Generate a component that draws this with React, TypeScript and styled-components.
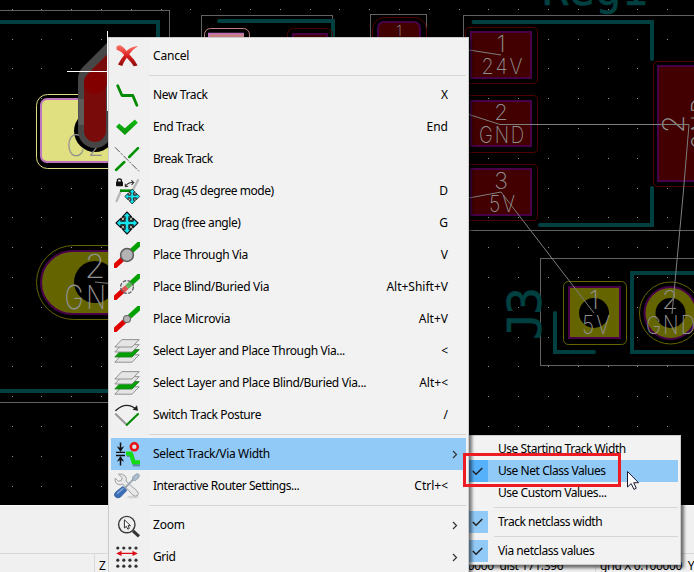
import React from "react";
import styled, { createGlobalStyle } from "styled-components";

const GlobalStyle = createGlobalStyle`
  * { box-sizing: border-box; }
  body { margin: 0; background: #000; overflow: hidden; }
`;

const UI_FONT = `"Noto Sans", "Open Sans", sans-serif`;
const TEAL = "#004040";
const LABEL = "#7e7e7e";

const Window = styled.div`
  position: relative;
  display: flex;
  flex-direction: column;
  width: 694px;
  height: 572px;
  overflow: hidden;
  font-family: ${UI_FONT};
  font-size: 12px;
  color: #000;
`;

const Board = styled.svg`
  display: block;
  flex: none;
  width: 694px;
  height: 505px;
  background: #000;
`;

const MessagePanel = styled.div`
  flex: none;
  height: 48px;
  background: #f0f0f0;
  border-top: 1px solid #fafafa;
`;

const StatusBar = styled.div`
  display: flex;
  flex: none;
  height: 30px;
  background: #f0f0f0;
  border-top: 1px solid #d9d9d9;
`;

const StatusField = styled.div<{ $width: number; $end?: boolean }>`
  flex: none;
  width: ${(p) => p.$width}px;
  padding: 3px ${(p) => (p.$end ? 45 : 4)}px 0 4px;
  line-height: 17px;
  white-space: pre;
  letter-spacing: -0.35px;
  text-align: ${(p) => (p.$end ? "right" : "left")};
  border-right: 1px solid #d9d9d9;
`;

const Menu = styled.div`
  position: absolute;
  z-index: 2;
  left: 108px;
  top: 37px;
  width: 361px;
  height: 560px;
  padding: 2px;
  border: 1px solid #ccc;
  background: linear-gradient(90deg, #f0f0f0 40px, #f2f2f2 40px);
  box-shadow: 3px 3px 3px rgba(0, 0, 0, 0.5);
`;

const MenuRow = styled.div<{ $active?: boolean }>`
  display: grid;
  grid-template-columns: 26px 1fr auto 18px;
  align-items: center;
  height: 32px;
  padding-left: 3px;
  background: ${(p) => (p.$active ? "#91c9f7" : "transparent")};
`;

const Icon = styled.svg`
  display: block;
  width: 26px;
  height: 26px;
`;

const Label = styled.span<{ $spacing?: number }>`
  padding-left: 13px;
  line-height: 16px;
  white-space: pre;
  letter-spacing: ${(p) => p.$spacing ?? -0.2}px;
`;

const Shortcut = styled.span`
  line-height: 16px;
  white-space: pre;
`;

const Chevron = styled.svg`
  display: block;
  width: 6px;
  height: 9px;
  margin-left: 4px;
`;

const Separator = styled.div<{ $inset: number }>`
  height: 7px;
  padding: 3px 0 3px ${(p) => p.$inset}px;
  &::after {
    content: "";
    display: block;
    height: 1px;
    background: #d5d5d5;
  }
`;

const SubMenu = styled.div`
  position: absolute;
  z-index: 1;
  left: 466px;
  top: 435px;
  width: 215px;
  height: 130px;
  padding: 2px;
  border: 1px solid #ccc;
  background: #f2f2f2;
  box-shadow: 3px 3px 3px rgba(0, 0, 0, 0.55);
`;

const SubRow = styled.div<{ $active?: boolean }>`
  display: flex;
  align-items: center;
  height: 22px;
  background: ${(p) => (p.$active ? "#91c9f7" : "transparent")};
`;

const CheckCell = styled.span<{ $checked?: boolean; $active?: boolean }>`
  display: flex;
  align-items: center;
  justify-content: flex-end;
  flex: none;
  width: 19px;
  height: 22px;
  padding-right: 5px;
  background: ${(p) => (p.$active ? "#56b0fa" : p.$checked ? "#91c9f7" : "transparent")};
`;

const SubLabel = styled.span`
  padding-left: 10px;
  line-height: 16px;
  white-space: pre;
  letter-spacing: -0.45px;
`;

const Highlight = styled.div`
  position: absolute;
  z-index: 3;
  left: 463px;
  top: 453px;
  width: 158px;
  height: 34px;
  border: 3px solid #ed1c24;
`;

const Pointer = styled.svg`
  position: absolute;
  z-index: 4;
  left: 626px;
  top: 470px;
  width: 15px;
  height: 21px;
`;

/* ---------- menu icons, all on a 26 x 26 grid ---------- */

const CancelIcon = () => (
  <Icon viewBox="0 0 26 26">
    <defs>
      <linearGradient id="cancelRed" x1="0" y1="0" x2="0" y2="1">
        <stop offset="0" stopColor="#ff7a6a" />
        <stop offset="0.5" stopColor="#d92020" />
        <stop offset="1" stopColor="#8c0a0a" />
      </linearGradient>
    </defs>
    <path
      d="M2.5 3.5 Q5 1.5 7 2.6 Q10 4.5 12.5 8 Q17 3.4 24.2 3 Q18.5 6.5 15.2 11.3 Q20.5 16.5 23.6 22.5 L19.8 23.2 Q16.5 18.5 12.8 14.8 Q9.8 18.8 8.2 23 L4 21.6 Q6.8 16 10.2 12 Q6.5 8 2.5 6.6 Z"
      fill="url(#cancelRed)"
    />
  </Icon>
);

const NewTrackIcon = () => (
  <Icon viewBox="0 0 26 26">
    <path d="M3.7 3.8 L8 13.5 H18.8 L22.9 23.2" fill="none" stroke="#008a00" strokeWidth="2.8" strokeLinecap="round" strokeLinejoin="round" />
  </Icon>
);

const CheckIcon = () => (
  <Icon viewBox="0 0 26 26">
    <defs>
      <linearGradient id="checkGreen" x1="0" y1="0" x2="0" y2="1">
        <stop offset="0" stopColor="#12bc12" />
        <stop offset="1" stopColor="#089008" />
      </linearGradient>
    </defs>
    <path d="M2 12.7 L5.2 9.5 L10.8 14.2 L20.8 5.5 L23.8 8.8 L10.9 21 Z" fill="url(#checkGreen)" />
  </Icon>
);

const BreakIcon = () => (
  <Icon viewBox="0 0 26 26" fill="none">
    <path d="M1 1.3 L25 25.3" stroke="#444" strokeWidth="0.9" strokeDasharray="7 1.5 2 1.5" />
    <path d="M2 24 L10.3 16 M15.2 11 L24 2.2" stroke="#009000" strokeWidth="2.5" strokeLinecap="round" />
  </Icon>
);

const MoveShape = () => (
  <g>
    <path
      d="M0 -11 L4.6 -6.2 H1.9 V-1.9 H6.2 V-4.6 L11 0 L6.2 4.6 V1.9 H1.9 V6.2 H4.6 L0 11 L-4.6 6.2 H-1.9 V1.9 H-6.2 V4.6 L-11 0 L-6.2 -4.6 V-1.9 H-1.9 V-6.2 H-4.6 Z"
      fill="#16e2ee"
      stroke="#101010"
      strokeWidth="1.1"
      strokeLinejoin="round"
    />
    {[-4, 4].map((x) => [-4, 4].map((y) => <circle key={`${x}${y}`} cx={x} cy={y} r="1.5" fill="#f2f2f2" stroke="#151515" strokeWidth="1.2" />))}
  </g>
);

const DragIcon = () => (
  <Icon viewBox="0 0 26 26" fill="none">
    <path d="M2.6 23 L7.2 12.5 M18.8 12 L24 2.2" stroke="#b8b8b8" strokeWidth="2.4" strokeLinecap="round" />
    <path d="M6 12.7 H17" stroke="#008a00" strokeWidth="2.6" />
    <path d="M3.4 4 V2.4 Q3.4 0.8 5.4 0.8 Q7.4 0.8 7.4 2.4 V4" stroke="#111" strokeWidth="1.3" />
    <rect x="2" y="3.5" width="7" height="4.8" rx="0.8" fill="#111" />
    <path d="M11.5 8.5 Q14 4 19 4.5 M11.3 5.8 L11.4 8.7 L14.2 8.3 M17.3 2.3 L19.7 4.6 L17.6 6.8" stroke="#333" strokeWidth="1.1" />
    <g transform="translate(18.2 18.5) scale(0.68)">
      <MoveShape />
    </g>
  </Icon>
);

const MoveIcon = () => (
  <Icon viewBox="0 0 26 26">
    <g transform="translate(13 13)">
      <MoveShape />
    </g>
  </Icon>
);

const ViaIcon = ({ kind }: { kind: "through" | "blind" | "micro" }) => (
  <Icon viewBox="0 0 26 26" fill="none">
    <path d="M-1 25.8 L13 13" stroke="#e00000" strokeWidth="5" />
    <path d="M13 13 L27 0.2" stroke="#00a000" strokeWidth="5" />
    {kind === "through" && <circle cx="13" cy="13" r="6.4" fill="#b3b3b3" stroke="#595959" strokeWidth="1.5" />}
    {kind === "micro" && <circle cx="13" cy="13" r="3.5" fill="#b3b3b3" stroke="#686868" strokeWidth="1.1" />}
    {kind === "blind" && (
      <>
        <circle cx="13" cy="13" r="6" fill="#d8d8d8" fillOpacity="0.4" />
        <circle cx="13" cy="13" r="6.4" stroke="#5c5c5c" strokeWidth="1.3" strokeDasharray="3.6 1.4" />
      </>
    )}
  </Icon>
);

const LayersIcon = () => (
  <Icon viewBox="0 0 26 26">
    {[15.2, 10, 5, 0].map((dy) => (
      <path
        key={dy}
        d="M7.8 1.6 H25.2 L18 9 H0.8 Z"
        transform={`translate(0 ${dy})`}
        fill={dy === 10 ? "#00a000" : "#e4e4e4"}
        stroke={dy === 10 ? "#268026" : "#888"}
        strokeWidth="0.9"
      />
    ))}
  </Icon>
);

const PostureIcon = () => (
  <Icon viewBox="0 0 26 26" fill="none" strokeLinecap="round">
    <path d="M1.8 12.2 L12.7 22.8" stroke="#999" strokeWidth="2.1" />
    <path d="M12.9 22.8 L24 12" stroke="#008a00" strokeWidth="2.1" />
    <path d="M1.8 8.4 Q12.5 -1.2 22.5 7.5" stroke="#222" strokeWidth="1.4" />
    <path d="M18.6 7.8 L24 8.8 L23 3.3 Z" fill="#222" />
  </Icon>
);

const TrackWidthIcon = () => (
  <Icon viewBox="0 0 26 26" fill="none">
    <path d="M13 14 H17.5 L20.5 23.4 H26" stroke="#5c8cae" strokeWidth="4" />
    <path d="M12 12.5 H16.8 L19.6 21.2 H26" stroke="#14dc14" strokeWidth="4" />
    <circle cx="20.3" cy="5.8" r="3.5" fill="#d8e4ec" stroke="#ea1010" strokeWidth="2.5" />
    <path d="M2 11.4 H11 M2 14.5 H11" stroke="#111" strokeWidth="1.4" />
    <path d="M6.5 1.5 V8 M6.5 18 V24.5" stroke="#111" strokeWidth="1.5" />
    <path d="M2.8 5.3 L6.5 7 L10.2 5.3 L6.5 11 Z M2.8 20.7 L6.5 19 L10.2 20.7 L6.5 15 Z" fill="#111" />
  </Icon>
);

const ToolsIcon = () => (
  <Icon viewBox="0 0 26 26">
    <ellipse cx="19" cy="24" rx="6" ry="1.4" fill="#d4d4d4" />
    <path
      d="M4.5 1.2 L8.2 4.6 L7.3 7.5 L4.3 8.2 L1.2 5.2 Q0.3 10 4.2 11.5 Q6.6 12.2 8.6 11 L18.5 21.7 Q21.3 24.4 23.8 22.3 Q25.2 20.2 23 18 L12.2 8.1 Q13 5 11 2.8 Q8.5 0.2 4.5 1.2 Z"
      fill="#e8e8e8"
      stroke="#969696"
      strokeWidth="0.9"
    />
    <path d="M10.8 15.2 L20.2 5.4" stroke="#9aa6b2" strokeWidth="1.8" />
    <path d="M18.7 3.8 L22.8 0.6 L25.2 1.6 L25 4.4 L21.3 7.6 L18.7 7 Z" fill="#aebdcd" stroke="#7c90a8" strokeWidth="0.7" />
    <path d="M8.8 13.4 L12.9 17.3 L6.5 24 Q3.2 26 1 23.4 Q-0.4 21.2 1.8 19.1 Z" fill="#3c6eb8" stroke="#2b5596" strokeWidth="0.8" />
    <path d="M3 20.8 L9.5 15.2" stroke="#87aee0" strokeWidth="1.3" />
  </Icon>
);

const ZoomIcon = () => (
  <Icon viewBox="0 0 26 26">
    <circle cx="12.8" cy="12.6" r="8.2" fill="#f0f0f0" stroke="#3a3a3a" strokeWidth="1.4" />
    <path d="M19 18.8 L25 24.4" stroke="#333" strokeWidth="3.2" />
    <path d="M10.4 7.8 V16 L12.3 14.3 L13.8 17.2 L15.3 16.4 L14 13.7 H16.5 Z" fill="#fff" stroke="#333" strokeWidth="1" />
  </Icon>
);

const GridIcon = () => (
  <Icon viewBox="0 0 26 26">
    {[4, 16.2, 22.2].map((y) => [3.8, 9.8, 15.9, 22].map((x) => <circle key={`${x}-${y}`} cx={x} cy={y} r="1.6" fill="#333" />))}
    <path d="M2.2 9.4 L7.5 6.8 V8.7 H18.5 V6.8 L23.8 9.4 L18.5 12 V10.1 H7.5 V12 Z" fill="#dd0c14" />
  </Icon>
);

const Tick = () => (
  <svg width="11" height="9" viewBox="0 0 11 9" fill="none">
    <path d="M0.8 4 L4.1 7.3 L10.3 1" stroke="#222" strokeWidth="1.5" />
  </svg>
);

/* ---------- board drawing ---------- */

type StrokeTextProps = {
  x: number;
  y: number;
  size: number;
  width?: number;
  rotate?: boolean;
  children: string;
};

const StrokeText = ({ x, y, size, width, rotate, children }: StrokeTextProps) => (
  <text
    x={width ? x - width / 2 : x}
    y={y}
    fontFamily="Inter, Roboto, sans-serif"
    fontWeight="200"
    fontSize={size}
    letterSpacing={width ? size * 0.1 : 0}
    fill="#909090"
    textAnchor={width ? "start" : "middle"}
    textLength={width ? width + size * 0.09 : undefined}
    lengthAdjust="spacingAndGlyphs"
    transform={rotate ? `rotate(-90 ${x} ${y})` : undefined}
  >
    {children}
  </text>
);

const SilkText = ({ x, y, size, width, rotate, children }: StrokeTextProps) => (
  <text
    x={x}
    y={y}
    fontFamily='"DejaVu Sans Mono", monospace'
    fontSize={size}
    fill={TEAL}
    stroke={TEAL}
    strokeWidth="0.6"
    textLength={width}
    transform={rotate ? `rotate(-90 ${x} ${y})` : undefined}
  >
    {children}
  </text>
);

const dots = Array.from({ length: 17 }, (_, r) => Array.from({ length: 23 }, (_, c) => `M${Math.floor(12.1 + c * 29.8)} ${Math.floor(9.2 + r * 29.8)}h1v1h-1z`).join("")).join("");

const BoardDrawing = () => (
  <Board viewBox="0 0 694 505" fill="none">
    <path d={dots} fill="#909090" />

    <g stroke="#626262" shapeRendering="crispEdges">
      <path d="M0 10.5 H169.5 V40 M201.5 40 V15.5 H332.5 V40 M370.5 40 V14.5 H426.5 V40" />
      <path d="M463.5 40 V15.5 H694 M469 230.5 H694 M694 258.5 H540.5 V365.5 H694 M0 402.5 H108" />
    </g>

    <g stroke={TEAL} strokeWidth="4" strokeLinecap="round">
      <path d="M0 22 H158 V40 M219 21 H333 V40 M0 391 H110" />
      <path d="M473.5 22 H652 V59 M652 188 V225 H540 M555 313 V352 H594 M696 273 H632 V352 H696" />
    </g>

    <SilkText x={542} y={4.5} size={44}>Reg1</SilkText>
    <SilkText x={541} y={340} size={46} width={53} rotate>J3</SilkText>

    <g strokeWidth="1" stroke="#c48080">
      <rect x="204.5" y="28.5" width="45" height="40" rx="6" />
      <rect x="208" y="33" width="36" height="30" fill="#c48080" stroke="none" />
      <path d="M209 33 V63 M208 33.5 H244" stroke="#c070c0" strokeWidth="1.5" />
    </g>
    <g stroke="#500000">
      <rect x="287.5" y="28.5" width="45" height="40" rx="6" />
      <rect x="372.5" y="17.5" width="54" height="50" rx="12" />
      <path d="M469 27.5 H533 Q537.5 27.5 537.5 32 V79 Q537.5 83.5 533 83.5 H469 M465.5 40 V32 Q465.5 27.5 470 27.5" />
      <path d="M469 95.5 H533 Q537.5 95.5 537.5 100 V148 Q537.5 152.5 533 152.5 H469" />
      <path d="M469 164.5 H533 Q537.5 164.5 537.5 169 V216 Q537.5 220.5 533 220.5 H469" />
      <path d="M694 61.5 H658 Q653.5 61.5 653.5 66 V182 Q653.5 186.5 658 186.5 H694" />
    </g>
    <g fill="#420000" stroke="#480048" strokeWidth="2">
      <rect x="293" y="34" width="34" height="30" />
      <rect x="378" y="22" width="42" height="40" rx="6" />
      <rect x="471" y="32" width="60" height="46" />
      <rect x="471" y="101" width="60" height="45" />
      <rect x="471" y="169" width="60" height="46" />
      <rect x="658" y="66" width="40" height="115" />
    </g>

    <StrokeText x={399} y={36} size={15}>1</StrokeText>
    <StrokeText x={501} y={52} size={23}>1</StrokeText>
    <StrokeText x={502} y={74} size={22} width={41}>24V</StrokeText>
    <StrokeText x={501} y={120} size={22}>2</StrokeText>
    <StrokeText x={501.5} y={143} size={23} width={45}>GND</StrokeText>
    <StrokeText x={501} y={189} size={23}>3</StrokeText>
    <StrokeText x={502} y={212} size={23} width={26}>5V</StrokeText>
    <StrokeText x={684} y={124} size={30} rotate>2</StrokeText>
    <StrokeText x={713} y={124} size={30} width={52} rotate>GND</StrokeText>

    {/* connector J3 */}
    <rect x="563.5" y="281.5" width="63" height="63" rx="5" stroke="#646400" />
    <rect x="569" y="287" width="51" height="51" fill="#646400" stroke="#480048" strokeWidth="2" />
    <circle cx="594" cy="313" r="15" fill="#000" />
    <circle cx="670.5" cy="313" r="31" stroke="#646400" />
    <circle cx="670.5" cy="313" r="26" fill="#646400" stroke="#480048" strokeWidth="2" />
    <circle cx="670.5" cy="313" r="15" fill="#000" />
    <StrokeText x={594} y={309} size={26}>1</StrokeText>
    <StrokeText x={596} y={334} size={25} width={28}>5V</StrokeText>
    <StrokeText x={670} y={309} size={26}>2</StrokeText>
    <StrokeText x={670.5} y={334} size={25} width={49}>GND</StrokeText>

    {/* left pads */}
    <rect x="36.5" y="94.5" width="120" height="74" rx="11" stroke="#dede80" />
    <rect x="41" y="99" width="110" height="63" rx="6" fill="#e0e080" stroke="#bd75bd" strokeWidth="2" />
    <circle cx="95" cy="131" r="21" fill="#000" />
    <StrokeText x={85} y={156} size={30} width={37}>C2</StrokeText>
    <rect x="36.5" y="245.5" width="150" height="74" rx="37" stroke="#646400" />
    <rect x="41" y="251" width="140" height="63" rx="31.5" fill="#646400" stroke="#480048" strokeWidth="2" />
    <circle cx="95" cy="282" r="21" fill="#000" />
    <StrokeText x={95} y={278} size={33}>2</StrokeText>
    <StrokeText x={95.5} y={309} size={33} width={62}>GND</StrokeText>

    {/* track being routed */}
    <path d="M95 131 V79 L120 54" stroke="#464646" strokeWidth="34" strokeLinecap="round" strokeLinejoin="round" />
    <path d="M78.5 99 H84 V125 H78.5 Z" fill="#5c5c58" />
    <path d="M95 131 V82 L120 57" stroke="#7a0b0b" strokeWidth="22" strokeLinecap="round" strokeLinejoin="round" />
    <circle cx="95" cy="83" r="11" fill="#820000" />

    {/* unrouted connections */}
    <g stroke={LABEL}>
      <path d="M469 50 L501 55 M469 114.5 L500 124.5 H689 L683 196 L672 314 M469 198 L501 192 L594 313 M95 282 L110 283.5" />
    </g>
    <path d="M67 71.5 H108 M107.5 31 V111" stroke="#fff" shapeRendering="crispEdges" />
  </Board>
);

/* ---------- menu contents ---------- */

type Entry = { icon: React.ReactNode; label: string; keys?: string; sub?: boolean; active?: boolean; spacing?: number };

const groups: Entry[][] = [
  [{ icon: <CancelIcon />, label: "Cancel" }],
  [
    { icon: <NewTrackIcon />, label: "New Track", keys: "X", spacing: -0.37 },
    { icon: <CheckIcon />, label: "End Track", keys: "End", spacing: -0.37 },
    { icon: <BreakIcon />, label: "Break Track", spacing: -0.5 },
    { icon: <DragIcon />, label: "Drag (45 degree mode)", keys: "D", spacing: -0.46 },
    { icon: <MoveIcon />, label: "Drag (free angle)", keys: "G", spacing: -0.43 },
    { icon: <ViaIcon kind="through" />, label: "Place Through Via", keys: "V", spacing: -0.37 },
    { icon: <ViaIcon kind="blind" />, label: "Place Blind/Buried Via", keys: "Alt+Shift+V", spacing: -0.34 },
    { icon: <ViaIcon kind="micro" />, label: "Place Microvia", keys: "Alt+V", spacing: -0.2 },
    { icon: <LayersIcon />, label: "Select Layer and Place Through Via...", keys: "<", spacing: -0.38 },
    { icon: <LayersIcon />, label: "Select Layer and Place Blind/Buried Via...", keys: "Alt+<", spacing: -0.36 },
    { icon: <PostureIcon />, label: "Switch Track Posture", keys: "/", spacing: -0.4 },
  ],
  [
    { icon: <TrackWidthIcon />, label: "Select Track/Via Width", sub: true, active: true, spacing: -0.33 },
    { icon: <ToolsIcon />, label: "Interactive Router Settings...", keys: "Ctrl+<", spacing: -0.45 },
  ],
  [
    { icon: <ZoomIcon />, label: "Zoom", sub: true },
    { icon: <GridIcon />, label: "Grid", sub: true, spacing: -0.45 },
  ],
];

const subGroups = [
  [
    { label: "Use Starting Track Width", checked: false, active: false },
    { label: "Use Net Class Values", checked: true, active: true },
    { label: "Use Custom Values...", checked: false, active: false },
  ],
  [{ label: "Track netclass width", checked: true, active: false }],
  [{ label: "Via netclass values", checked: true, active: false }],
];

export default function App() {
  return (
    <>
      <GlobalStyle />
      <Window>
        <BoardDrawing />
        <MessagePanel />
        <StatusBar>
          <StatusField $width={95} />
          <StatusField $width={261}>Z</StatusField>
          <StatusField $width={240} $end>{"dx 0.000000  dy 0.000000  dist 171.396"}</StatusField>
          <StatusField $width={110}>grid X 0.100000  Y</StatusField>
        </StatusBar>

        <Menu>
          {groups.map((group, i) => (
            <React.Fragment key={i}>
              {i > 0 && <Separator $inset={38} />}
              {group.map((e) => (
                <MenuRow key={e.label} $active={e.active}>
                  {e.icon}
                  <Label $spacing={e.spacing}>{e.label}</Label>
                  <Shortcut>{e.keys}</Shortcut>
                  {e.sub && (
                    <Chevron viewBox="0 0 6 9" fill="none">
                      <path d="M1 1 L4.5 4.5 L1 8" stroke="#333" strokeWidth="1.2" />
                    </Chevron>
                  )}
                </MenuRow>
              ))}
            </React.Fragment>
          ))}
        </Menu>

        <SubMenu>
          {subGroups.map((group, i) => (
            <React.Fragment key={i}>
              {i > 0 && <Separator $inset={25} />}
              {group.map((e) => (
                <SubRow key={e.label} $active={e.active}>
                  <CheckCell $checked={e.checked} $active={e.active}>{e.checked && <Tick />}</CheckCell>
                  <SubLabel>{e.label}</SubLabel>
                </SubRow>
              ))}
            </React.Fragment>
          ))}
        </SubMenu>

        <Highlight />
        <Pointer viewBox="0 0 15 21">
          <path d="M1.5 1.5 V17 L5.2 13.6 L8 19.4 L10.3 18.2 L7.7 12.7 H12.5 Z" fill="#fff" stroke="#1a1a2e" strokeWidth="1" />
        </Pointer>
      </Window>
    </>
  );
}
